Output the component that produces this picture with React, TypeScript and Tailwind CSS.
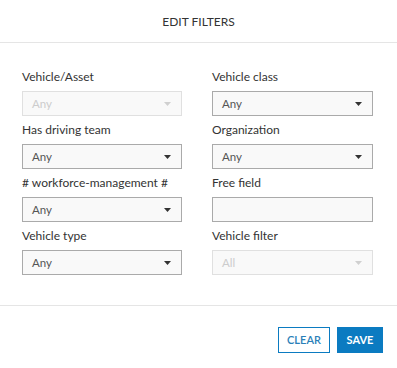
import React from 'react';

type Field = { label: string; value?: string; disabled?: boolean; input?: boolean };

const fields: Field[] = [
  { label: 'Vehicle/Asset', value: 'Any', disabled: true },
  { label: 'Vehicle class', value: 'Any' },
  { label: 'Has driving team', value: 'Any' },
  { label: 'Organization', value: 'Any' },
  { label: '# workforce-management #', value: 'Any' },
  { label: 'Free field', input: true },
  { label: 'Vehicle type', value: 'Any' },
  { label: 'Vehicle filter', value: 'All', disabled: true },
];

const Caret = ({ disabled }: { disabled?: boolean }) => (
  <svg width="7" height="4" viewBox="0 0 7 4" className={disabled ? 'text-[#d0d0d0]' : 'text-[#333]'}>
    <path d="M0 0h7L3.5 4z" fill="currentColor" />
  </svg>
);

const FilterField = ({ f }: { f: Field }) => (
  <div className="flex flex-col">
    <label className="text-[12px] leading-4 text-[#333] mb-[6px]">{f.label}</label>
    {f.input ? (
      <div className="h-[25px] border border-[#aaa] bg-[#f9f9f9]" />
    ) : (
      <div
        className={
          f.disabled
            ? 'h-[25px] border border-[#e0e0e0] bg-[#f9f9f9] flex items-center justify-between pl-[9px] pr-[10px]'
            : 'h-[25px] border border-[#aaa] bg-[#f9f9f9] flex items-center justify-between pl-[9px] pr-[10px]'
        }
      >
        <span className={f.disabled ? 'text-[11.5px] text-[#ccc]' : 'text-[11.5px] text-[#555]'}>{f.value}</span>
        <Caret disabled={f.disabled} />
      </div>
    )}
  </div>
);

export default function App() {
  return (
    <div className="w-[397px] h-[368px] bg-white font-['Lato',sans-serif]">
      <div className="h-[43px] border-b border-[#e5e5e5] flex items-center justify-center">
        <span className="text-[12px] text-[#333] pt-[1px]">EDIT FILTERS</span>
      </div>
      <div className="grid grid-cols-[160px_161px] gap-x-[30px] gap-y-[6px] pl-[22px] pr-[24px] pt-[26px] pb-[30px] border-b border-[#e5e5e5]">
        {fields.map((f) => (
          <FilterField key={f.label} f={f} />
        ))}
      </div>
      <div className="flex justify-end gap-[7px] pt-[21px] pr-[14px]">
        <button className="h-[26px] w-[52px] border border-[#0b7bc1] text-[#2a7fb8] text-[11px] font-semibold bg-white">
          CLEAR
        </button>
        <button className="h-[26px] w-[46px] bg-[#0b7bc1] text-white text-[11px] font-bold">SAVE</button>
      </div>
    </div>
  );
}
